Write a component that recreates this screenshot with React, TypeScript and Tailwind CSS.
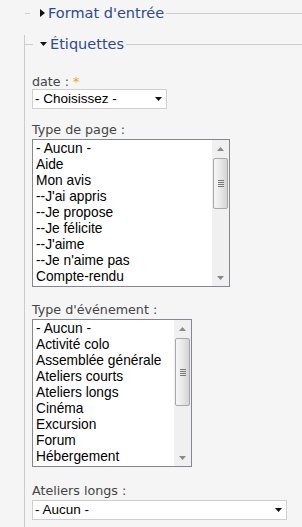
import React from 'react';

const pageTypes = [
  '- Aucun -',
  'Aide',
  'Mon avis',
  "--J'ai appris",
  '--Je propose',
  '--Je félicite',
  "--J'aime",
  "--Je n'aime pas",
  'Compte-rendu',
];

const eventTypes = [
  '- Aucun -',
  'Activité colo',
  'Assemblée générale',
  'Ateliers courts',
  'Ateliers longs',
  'Cinéma',
  'Excursion',
  'Forum',
  'Hébergement',
];

function DownArrow() {
  return (
    <svg width="7" height="4" viewBox="0 0 7 4" className="block">
      <path d="M0 0 L7 0 L3.5 4 Z" fill="#111" />
    </svg>
  );
}

function Dropdown({ value, width }: { value: string; width: string }) {
  return (
    <div
      className={`${width} h-[20px] flex items-center justify-between bg-white border border-[#cfcfcf] pl-[2px] pr-[4px] text-[13.5px] text-black font-['Liberation_Sans',Arial,sans-serif]`}
    >
      <span>{value}</span>
      <DownArrow />
    </div>
  );
}

// fake Windows-style scrollbar next to the listbox
function ScrollBar({ thumbTop, thumbHeight }: { thumbTop: string; thumbHeight: string }) {
  return (
    <div className="w-[17px] bg-[#f0f0f0] flex flex-col items-center relative">
      <div className="h-[17px] flex items-center justify-center">
        <svg width="7" height="4" viewBox="0 0 7 4">
          <path d="M0 4 L7 4 L3.5 0 Z" fill="#8a8a8a" />
        </svg>
      </div>
      <div
        className={`absolute left-[1px] ${thumbTop} ${thumbHeight} w-[15px] rounded-[2px] border border-[#a8a8a8] bg-gradient-to-r from-[#f6f6f6] via-[#e8e8e8] to-[#d4d4d4] flex flex-col items-center justify-center gap-[1px]`}
      >
        <div className="w-[6px] h-px bg-[#777]" />
        <div className="w-[6px] h-px bg-[#777]" />
        <div className="w-[6px] h-px bg-[#777]" />
        <div className="w-[6px] h-px bg-[#777]" />
      </div>
      <div className="flex-1" />
      <div className="h-[17px] flex items-center justify-center">
        <svg width="7" height="4" viewBox="0 0 7 4">
          <path d="M0 0 L7 0 L3.5 4 Z" fill="#8a8a8a" />
        </svg>
      </div>
    </div>
  );
}

function ListBox({ items, width, thumbTop, thumbHeight }: { items: string[]; width: string; thumbTop: string; thumbHeight: string }) {
  return (
    <div className={`${width} h-[148px] flex bg-white border border-[#828790]`}>
      <ul className="flex-1 pt-px pl-[3px] text-[13.75px] leading-[16px] text-black font-['Liberation_Sans',Arial,sans-serif] overflow-hidden">
        {items.map((it) => (
          <li key={it} className="h-[16px] whitespace-nowrap">{it}</li>
        ))}
      </ul>
      <ScrollBar thumbTop={thumbTop} thumbHeight={thumbHeight} />
    </div>
  );
}

function Label({ children }: { children: React.ReactNode }) {
  return (
    <div className="text-[12.7px] leading-[15px] text-[#444] font-['DejaVu_Sans',Verdana,sans-serif]">{children}</div>
  );
}

export default function App() {
  return (
    <div className="w-[302px] h-[527px] overflow-hidden bg-[#f5f5f5] pl-[24px] flex flex-col font-['DejaVu_Sans',Verdana,sans-serif]">
      {/* Format d'entrée (replié) */}
      <div className="h-[18px] mt-[4px] flex items-center">
        <div className="w-[5px] h-px bg-[#cccccc] ml-px" />
        <div className="pl-[10px] pr-[2px] flex items-center gap-[3px] text-[14.5px] leading-[18px] text-[#2e4a8e]">
          <svg width="5" height="8" viewBox="0 0 5 8" className="block">
            <path d="M0 0 L5 4 L0 8 Z" fill="#111" />
          </svg>
          <span>Format d'entrée</span>
        </div>
        <div className="flex-1 h-px bg-[#cccccc]" />
      </div>

      {/* Étiquettes */}
      <div className="mt-[13px] flex-1 min-h-0 border-l border-[#cccccc]">
        <div className="h-[18px] flex items-center">
          <div className="w-[8px] h-px bg-[#cccccc]" />
          <div className="pl-[7px] pr-[2px] flex items-center gap-[3px] text-[14.5px] leading-[18px] text-[#2e4a8e]">
            <svg width="7" height="4" viewBox="0 0 7 4" className="block">
              <path d="M0 0 L7 0 L3.5 4 Z" fill="#111" />
            </svg>
            <span>Étiquettes</span>
          </div>
          <div className="flex-1 h-px bg-[#cccccc]" />
        </div>

        <div className="pl-[7px] pt-[21px] flex flex-col">
          <Label>
            date : <span className="text-[#f0a30a]">*</span>
          </Label>
          <Dropdown value="- Choisissez -" width="w-[135px]" />

          <div className="mt-[13px] mb-[2px]">
            <Label>Type de page :</Label>
          </div>
          <ListBox items={pageTypes} width="w-[198px]" thumbTop="top-[18px]" thumbHeight="h-[51px]" />

          <div className="mt-[15px] mb-[2px]">
            <Label>Type d'événement :</Label>
          </div>
          <ListBox items={eventTypes} width="w-[160px]" thumbTop="top-[18px]" thumbHeight="h-[68px]" />

          <div className="mt-[16px] mb-[2px]">
            <Label>Ateliers longs :</Label>
          </div>
          <Dropdown value="- Aucun -" width="w-[255px]" />
        </div>
      </div>
    </div>
  );
}
